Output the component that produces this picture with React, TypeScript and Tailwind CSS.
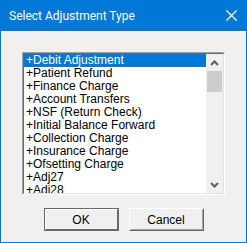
import React from 'react'

const items = [
  '+Debit Adjustment',
  '+Patient Refund',
  '+Finance Charge',
  '+Account Transfers',
  '+NSF (Return Check)',
  '+Initial Balance Forward',
  '+Collection Charge',
  '+Insurance Charge',
  '+Ofsetting Charge',
  '+Adj27',
  '+Adj28',
]

const Chevron: React.FC<{ down?: boolean }> = ({ down }) => (
  <svg width="9" height="6" viewBox="0 0 9 6" className={down ? 'rotate-180' : ''}>
    <path d="M1 5 L4.5 1.5 L8 5" fill="none" stroke="#606060" strokeWidth="2" />
  </svg>
)

const App: React.FC = () => {
  return (
    <div className="w-[247px] h-[243px] bg-[#0078d7] flex flex-col font-['Liberation_Sans',sans-serif]">
      {/* Title bar */}
      <div className="h-[31px] flex items-center justify-between pl-[9px] pr-[10px] text-white">
        <span className="text-[12px] font-['Roboto',sans-serif] leading-none">Select Adjustment Type</span>
        <svg width="11" height="11" viewBox="0 0 11 11">
          <path d="M0.5 0.5 L10.5 10.5 M10.5 0.5 L0.5 10.5" stroke="white" strokeWidth="1.2" />
        </svg>
      </div>

      {/* Body */}
      <div className="flex-1 mx-px mb-px bg-[#f0f0f0] flex flex-col items-center pt-[21px]">
        {/* Listbox */}
        <div className="w-[203px] h-[143px] border border-t-[#a0a0a0] border-l-[#a0a0a0] border-r-white border-b-white">
          <div className="w-full h-full border border-t-[#696969] border-l-[#696969] border-r-[#e3e3e3] border-b-[#e3e3e3] bg-white flex overflow-hidden">
            <div className="w-[182px] flex flex-col">
              {items.map((item, i) => (
                <div
                  key={i}
                  className={`h-[13px] shrink-0 pl-[2px] text-[12px] leading-[13px] whitespace-nowrap ${
                    i === 0 ? 'bg-[#0078d7] text-white' : 'text-black'
                  }`}
                >
                  {item}
                </div>
              ))}
            </div>
            {/* Scrollbar */}
            <div className="w-[17px] bg-[#f0f0f0] flex flex-col">
              <div className="h-[17px] flex items-center justify-center">
                <Chevron />
              </div>
              <div className="h-[21px] mx-px bg-[#cdcdcd]" />
              <div className="flex-1" />
              <div className="h-[17px] flex items-center justify-center">
                <Chevron down />
              </div>
            </div>
          </div>
        </div>

        {/* Buttons */}
        <div className="flex gap-[10px] mt-[13px]">
          <button className="w-[75px] h-[23px] border border-[#696969] bg-[#f0f0f0] p-0">
            <div className="w-full h-full border border-t-white border-l-white border-r-[#696969] border-b-[#696969] flex items-center justify-center text-[12px] text-black">
              OK
            </div>
          </button>
          <button className="w-[75px] h-[23px] border border-t-white border-l-white border-r-[#696969] border-b-[#696969] bg-[#f0f0f0] p-0">
            <div className="w-full h-full border border-t-[#f0f0f0] border-l-[#f0f0f0] border-r-[#a0a0a0] border-b-[#a0a0a0] flex items-center justify-center text-[12px] text-black">
              Cancel
            </div>
          </button>
        </div>
      </div>
    </div>
  )
}

export default App
